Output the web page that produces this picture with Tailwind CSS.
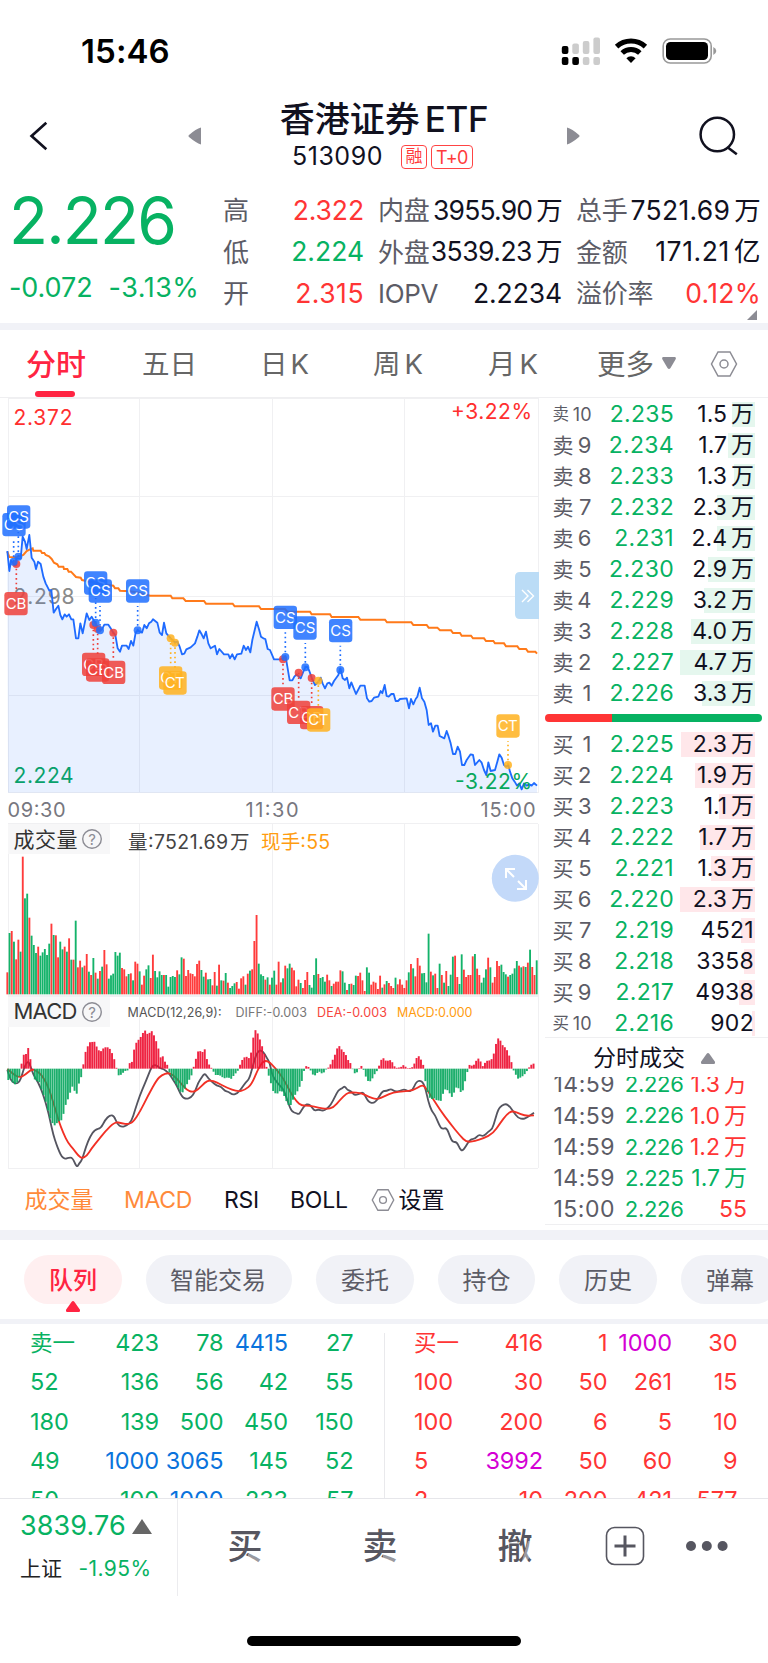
<!DOCTYPE html>
<html lang="zh-CN">
<head>
<meta charset="utf-8">
<title>香港证券ETF 513090</title>
<script src="https://cdn.jsdelivr.net/npm/@tailwindcss/browser@4"></script>
</head>
<body class="bg-white font-['Inter','Noto_Sans_CJK_SC',sans-serif] text-[#11111f]">
<div class="flex h-[1663px] w-[768px] flex-col overflow-hidden bg-white">

  <!-- status bar -->
  <div class="flex h-[98px] shrink-0 items-start pt-[30px] pl-[81px]">
    <div class="w-[478.500px] text-[33px] leading-[42px] font-semibold tracking-[0.100px] text-black">15:46</div>
    <svg class="h-[42px] w-[160px]" viewBox="560 30 160 42">
      <g fill="#000"><rect x="561.8" y="46" width="6.6" height="8" rx="2"/><rect x="561.8" y="57" width="6.6" height="8" rx="2"/><rect x="572.3" y="57" width="6.6" height="8" rx="2"/></g>
      <g fill="#ccc"><rect x="572.3" y="43.5" width="6.6" height="10.5" rx="2"/><rect x="582.8" y="41" width="6.6" height="13" rx="2"/><rect x="593.4" y="37.5" width="6.6" height="16.5" rx="2"/><rect x="582.8" y="57" width="6.6" height="8" rx="2"/><rect x="593.4" y="57" width="6.6" height="8" rx="2"/></g>
      <g fill="none" stroke="#000" stroke-width="5"><path d="M616.6 46.6A21 21 0 0 1 645.4 46.6"/><path d="M622.2 53A12.8 12.8 0 0 1 639.8 53"/></g>
      <path d="M626.4 58.2a6.6 6.6 0 0 1 9.2 0L631 63z" fill="#000"/>
      <rect x="663.2" y="39" width="48" height="24" rx="7" fill="none" stroke="#999" stroke-width="1.6"/>
      <rect x="666" y="42" width="42" height="18" rx="4.5" fill="#000"/>
      <path d="M713.3 47v8q3-1.5 3-4t-3-4" fill="#999"/>
    </svg>
  </div>

  <!-- title bar -->
  <div class="flex h-[82px] shrink-0 items-start pl-[29px]">
    <svg class="mt-[22px] h-8 w-5 shrink-0" viewBox="29 120 20 32"><path d="M46.300 122.800L31.600 136l14.700 13.200" fill="none" stroke="#11111f" stroke-width="2.700"/></svg>
    <svg class="mt-[28px] ml-[138px] h-5 w-4 shrink-0" viewBox="187 126 16 20"><path d="M201 127.500v17q-5-1.500-12-7.400q-1.300-1.100 0-2.200q7-5.900 12-7.400" fill="#8c8c94"/></svg>
    <div class="flex h-[82px] w-[362px] shrink-0 flex-col items-center pt-[1px]">
      <div class="flex h-[40px] items-center gap-[5px] text-[35px] leading-[40px] font-medium"><span>香港证券</span><span class="tracking-[-0.300px]">ETF</span></div>
      <div class="flex h-9 items-center pr-[3px]">
        <span class="mr-[18px] text-[25px] tracking-[0.500px]">513090</span>
        <span class="mr-1 flex h-6 w-[26px] items-center justify-center rounded border-[1.500px] border-[#ff4444] text-[17px] text-[#ff3b3b]">融</span>
        <span class="flex h-6 w-[42px] items-center justify-center rounded border-[1.500px] border-[#ff4444] text-[18px] tracking-[-0.500px] text-[#ff3b3b]">T+0</span>
      </div>
    </div>
    <svg class="mt-[28px] h-5 w-4 shrink-0" viewBox="565 126 16 20"><path d="M567 127.500v17q5-1.500 12-7.400q1.300-1.100 0-2.200q-7-5.900-12-7.400" fill="#8c8c94"/></svg>
    <svg class="mt-[16px] ml-[117px] h-[44px] w-[42px] shrink-0" viewBox="698 114 42 44"><g fill="none" stroke="#11111f" stroke-width="2.500"><circle cx="717.300" cy="134.500" r="16.700"/><path d="M727.500 147.200L736.800 154.300"/></g></svg>
  </div>

  <!-- quote -->
  <div class="flex h-[143px] shrink-0 pt-[10px]">
    <div class="w-[223px] pl-[9px] text-[#07b262]">
      <div class="h-[62px] text-[64px] leading-[62px] tracking-[-1.800px]">2.226</div>
      <div class="mt-[15px] flex gap-[16px] text-[27px] leading-[42px] tracking-[-0.100px]"><span>-0.072</span><span class="tracking-[0.500px]">-3.13%</span></div>
    </div>
    <div id="stats" class="grid h-[125px] w-[539px] grid-cols-[141px_184px_185px] gap-x-[14px] text-[27px]"></div>
  </div>
  <div class="relative h-[7px] shrink-0 bg-[#f1f2f7]"><svg class="absolute -top-[13px] right-[11px] h-[10px] w-[10px]" viewBox="0 0 10 10"><path d="M10 0v10H0z" fill="#8c8c94"/></svg></div>

  <!-- period tabs -->
  <div class="flex h-[68px] shrink-0 border-b border-[#efeff1] text-[27.500px] leading-[69px] text-[#666]">
    <div class="relative ml-[26px] w-[60px] text-[30px] font-medium text-[#ff2442]">分时<span class="absolute bottom-0 left-[9px] h-[6px] w-10 rounded-[3px] bg-[#ff2442]"></span></div>
    <div class="ml-[56px] w-[56px]">五日</div>
    <div class="ml-[62px] flex w-[54px] gap-[3px]"><span>日</span><span>K</span></div>
    <div class="ml-[59px] flex w-[54px] gap-[4px]"><span>周</span><span>K</span></div>
    <div class="ml-[61px] flex w-[54px] gap-[4px]"><span>月</span><span>K</span></div>
    <div class="ml-[55px] w-[59px] text-[28.500px]">更多</div>
    <svg class="mt-[27px] ml-[6px] h-[13px] w-[14px]" viewBox="0 0 14 13"><path d="M1 0h12q1.500.5.500 2.500L8.500 11q-1.500 2-3 0L.5 2.500Q-.5.500 1 0" fill="#8c8c94"/></svg>
    <svg class="mt-[20px] ml-[34px] h-7 w-7" viewBox="0 0 28 28"><g fill="none" stroke="#8c8c94" stroke-width="1.500"><path d="M8 2h12l6.500 12L20 26H8L1.500 14z"/><circle cx="14" cy="14" r="4"/></g></svg>
  </div>

  <!-- charts and order book -->
  <div class="flex h-[832px] shrink-0">
    <div class="flex w-[545px] flex-col">
      <svg class="h-[426px] w-[545px]" viewBox="0 398 545 426">
        <g stroke="#f0f0f2"><path d="M8.500 398V793M139.500 398V793M272.500 398V793M404.500 398V793M538.500 398V793M8 398.500H538M8 496.500H538M8 596.500H538M8 695.500H538M8 792.500H538M8 823.500H538" fill="none"/></g>
        <g font-size="21" lengthAdjust="spacing">
          <text x="13.500" y="425" textLength="59" fill="#ff2f2f">2.372</text>
          <text x="13.500" y="604" textLength="61" fill="#8a8a8a">2.298</text>
          <text x="13.500" y="783" textLength="60" fill="#07a85c">2.224</text>
          <text x="451" y="419" textLength="81" fill="#ff2f2f">+3.22%</text>
        </g>
        <g font-size="20" fill="#777780">
          <text x="7.500" y="816.500" textLength="58">09:30</text>
          <text x="245.500" y="816.500" textLength="53">11:30</text>
          <text x="480.500" y="816.500" textLength="55">15:00</text>
        </g>
        <g id="price" transform="translate(0 395) scale(.33333)"></g>
        <text x="455" y="789" font-size="21" textLength="77" fill="#07a85c">-3.22%</text>
        <g id="marks" transform="translate(0 395) scale(.33333)"></g>
        <path d="M539 572h-19q-5 0-5 5v37q0 5 5 5h19z" fill="#bbdcf6"/>
        <path d="M522 590l6 6-6 6M527.500 590l6 6-6 6" fill="none" stroke="#fff" stroke-width="1.400"/>
      </svg>
      <svg class="h-[172px] w-[545px]" viewBox="0 824 545 172">
        <path d="M8.500 824V996M139.500 824V996M272.500 824V996M404.500 824V996M538.500 824V996M8 995.500H538" stroke="#f0f0f2" fill="none"/>
        <rect x="8" y="824" width="102" height="30" fill="#f7f7f8"/>
        <text x="13.500" y="846.500" font-size="21" textLength="64" fill="#333">成交量</text>
        <circle cx="92" cy="839" r="9.300" fill="none" stroke="#8c8c94" stroke-width="1.400"/>
        <text x="92" y="844.500" font-size="15" text-anchor="middle" fill="#8c8c94">?</text>
        <g font-size="19.500"><text x="128" y="848.500" fill="#444" textLength="100">量:7521.69</text><text x="230" y="848.500" fill="#444">万</text><text x="261" y="848.500" textLength="69" fill="#ff9c10">现手:55</text></g>
        <g id="vol" transform="translate(0 815) scale(.33333)"></g>
        <circle cx="515.300" cy="878.300" r="23.500" fill="#c3d9f9"/>
        <path d="M506 878v-9h9M506 869l8 8M517 889h9v-9M526 889l-8-8" fill="none" stroke="#fff" stroke-width="2"/>
      </svg>
      <svg class="h-[175px] w-[545px]" viewBox="0 996 545 175">
        <path d="M8.500 996V1168M139.500 996V1168M272.500 996V1168M404.500 996V1168M538.500 996V1168M8 996.500H538M8 1168.500H538" stroke="#f0f0f2" fill="none"/>
        <rect x="8" y="997" width="102" height="30" fill="#f7f7f8"/>
        <text x="13.500" y="1019" font-size="22" textLength="64" fill="#333">MACD</text>
        <circle cx="92" cy="1012" r="9.300" fill="none" stroke="#8c8c94" stroke-width="1.400"/>
        <text x="92" y="1017.500" font-size="15" text-anchor="middle" fill="#8c8c94">?</text>
        <g font-size="12.500"><text x="127.500" y="1016.500" textLength="94" fill="#555">MACD(12,26,9):</text><text x="235.500" y="1016.500" textLength="71.500" fill="#777">DIFF:-0.003</text><text x="317" y="1016.500" textLength="70" fill="#f6453c">DEA:-0.003</text><text x="397" y="1016.500" textLength="75.500" fill="#ff9c10">MACD:0.000</text></g>
        <g id="macd" transform="translate(0 995) scale(.33333)"></g>
      </svg>
      <div class="flex h-[58px] items-center text-[23px]">
        <span class="ml-[24.500px] w-[99.500px] text-[#ff8a3a]">成交量</span><span class="w-[100px] tracking-[-0.300px] text-[#ff8a3a]">MACD</span><span class="w-[66px] tracking-[-0.300px]">RSI</span><span class="w-[80.500px] tracking-[-0.200px]">BOLL</span>
        <svg class="mr-[4px] h-6 w-6" viewBox="0 0 28 28"><g fill="none" stroke="#8c8c94" stroke-width="1.600"><path d="M8 2h12l6.500 12L20 26H8L1.500 14z"/><circle cx="14" cy="14" r="4"/></g></svg>
        <span>设置</span>
      </div>
    </div>

    <div class="flex w-[223px] flex-col">
      <div id="asks" class="flex h-[311px] flex-col pt-[1px]"></div>
      <div class="mt-[5px] flex h-2 w-[217px] overflow-hidden rounded-full"><span class="w-[67px] bg-[#ff3535]"></span><span class="flex-1 bg-[#07b262]"></span></div>
      <div id="bids" class="mt-[7px] flex h-[308px] flex-col"></div>
      <div class="flex h-[40px] items-center border-t border-[#efeff1] pt-[2px] pl-[48px] text-[23px]">分时成交<svg class="ml-4 h-[11px] w-[14px]" viewBox="0 0 14 11"><path d="M5.500 1q1.500-2 3 0L13.800 8.500q1 2-1 2.500H1.200q-2-.5-1-2.500z" fill="#8c8c94"/></svg></div>
      <div class="flex h-[148px] flex-col justify-end overflow-hidden border-b border-[#efeff1]"><div id="ticks" class="-mb-[1px] shrink-0"></div></div>
    </div>
  </div>

  <div class="h-[10px] shrink-0 bg-[#f1f2f7]"></div>

  <!-- section chips -->
  <div class="flex h-[79px] shrink-0 gap-6 overflow-hidden pt-[15px] pl-6 text-[24px] text-[#5c5c66]">
    <div class="relative flex h-[49px] w-[98px] shrink-0 items-center justify-center rounded-full bg-[#ffeff0] pt-[2px] font-medium text-[#ff2442]">队列<svg class="absolute top-[46px] left-[42px] h-[11px] w-[14px]" viewBox="0 0 14 11"><path d="M5.500 1q1.500-2 3 0L13.800 8.500q1 2-1 2.500H1.200q-2-.5-1-2.500z" fill="#ff2442"/></svg></div>
    <div class="flex h-[49px] w-[146px] shrink-0 items-center justify-center rounded-full bg-[#f1f2f7] pt-[2px] pr-[2px]">智能交易</div>
    <div class="flex h-[49px] w-[98px] shrink-0 items-center justify-center rounded-full bg-[#f1f2f7] pt-[2px]">委托</div>
    <div class="flex h-[49px] w-[97px] shrink-0 items-center justify-center rounded-full bg-[#f1f2f7] pt-[2px]">持仓</div>
    <div class="flex h-[49px] w-[98px] shrink-0 items-center justify-center rounded-full bg-[#f1f2f7] pt-[2px]">历史</div>
    <div class="flex h-[49px] w-[98px] shrink-0 items-center justify-center rounded-full bg-[#f1f2f7] pt-[2px]">弹幕</div>
  </div>
  <div class="h-[5px] shrink-0 bg-[#f1f2f7]"></div>

  <!-- order queue -->
  <div class="flex h-[174px] shrink-0 overflow-hidden text-[23.500px] tracking-[-0.100px]">
    <div id="qs" class="-mt-[1px] w-[384px] pl-[30px] text-[#07b262]"></div>
    <div class="mt-[9px] w-px bg-[#e9e9ec]"></div>
    <div id="qb" class="-mt-[1px] w-[383px] pl-[29px] text-[#ff3535]"></div>
  </div>

  <!-- bottom bar -->
  <div class="flex h-[98px] shrink-0 border-t border-[#e6e6ea]">
    <div class="w-[178px] border-r border-[#ececef] pl-[20px] text-[#07b262]">
      <div class="mt-[9px] flex h-9 items-center text-[27px] tracking-[0.100px]">3839.76<svg class="ml-[6px] h-[15px] w-5" viewBox="0 0 20 15"><path d="M10 0l10 15H0z" fill="#666"/></svg></div>
      <div class="mt-[9px] flex h-8 items-center text-[21px]"><span class="w-[58.500px] text-[#222]">上证</span><span class="tracking-[0.400px]">-1.95%</span></div>
    </div>
    <div class="flex h-[94px] items-center text-[35px] font-medium text-[#565660]">
      <div class="ml-[49.500px] w-[135px]"><span class="relative inline-block">买<span class="absolute right-[1px] bottom-[7px] h-[11px] w-[14px] bg-white/40"></span></span></div>
      <div class="w-[135px]"><span class="relative inline-block">卖<span class="absolute right-[1px] bottom-[7px] h-[11px] w-[14px] bg-white/40"></span></span></div>
      <div class="w-[107px]"><span class="relative inline-block">撤<svg class="absolute right-0 bottom-[8px] h-[23px] w-[12px]" viewBox="0 0 12 23"><path d="M7 0h5v11L4 23H0z" fill="#fff" fill-opacity=".4"/></svg></span></div>
      <svg class="h-10 w-10" viewBox="0 0 40 40"><rect x="1.500" y="1.500" width="37" height="37" rx="8" fill="none" stroke="#565660" stroke-width="1.600"/><path d="M9.500 20h21M20 9.500v21" stroke="#565660" stroke-width="3"/></svg>
      <svg class="ml-[41.500px] h-3 w-[42px]" viewBox="0 0 42 12"><g fill="#565660"><circle cx="5" cy="6" r="5"/><circle cx="20.800" cy="6" r="5"/><circle cx="36.600" cy="6" r="5"/></g></svg>
    </div>
  </div>
  <div class="flex shrink-0 justify-center pt-[40px]"><span class="h-[10px] w-[274px] rounded-full bg-black"></span></div>
</div>

<script>
const $ = id => document.getElementById(id);
const unit = s => s.replace(/([万亿])/, '<span class="ml-[4px]">$1</span>');

/* header statistics: label, value, colour, tracking */
const R='text-[#ff3535]', G='text-[#07b262]', K='text-[#11111f]';
$('stats').innerHTML = [['高','2.322',R,'tracking-[-0.100px]'],['内盘','3955.90万',K,'tracking-[-0.800px]'],['总手','7521.69万',K,'tracking-[0.300px]'],['低','2.224',G,'tracking-[0px]'],['外盘','3539.23万',K,'tracking-[-0.500px]'],['金额','171.21亿',K,'tracking-[0.600px]'],['开','2.315',R,'tracking-[0.500px]'],['IOPV','2.2234',K,'tracking-[-0.100px]'],['溢价率','0.12%',R,'tracking-[0.300px]']]
 .map(([a,b,c,t]) => `<div class="flex h-[41.200px] items-center justify-between whitespace-nowrap"><span class="text-[26px] tracking-[-0.300px] text-[#5c5c66]">${a}</span><span class="text-[26.500px] ${t} ${c}">${unit(b)}</span></div>`).join('');

/* order book */
const book = (side,rows,bg) => rows.map(([n,p,v,w]) => `<div class="relative flex h-[31px] shrink-0 items-center pl-[7.500px] text-[23px] leading-[31px]"><span class="absolute top-[3px] right-[13px] h-[25px] ${bg}" style="width:${w}px"></span><span class="flex w-[39px] justify-between text-[#5c5c66] ${n==10?'text-[16.500px]':'text-[21px]'}"><span>${side}</span><span class="${n==10?'text-[18px]':'text-[22px]'}">${n}</span></span><span class="w-[82.500px] text-right tracking-[0.300px] text-[#07b262]">${p}</span><span class="relative w-[80px] text-right ${v.length<5&&!v.includes('万')?'tracking-[0.300px]':''}">${unit(v)}</span></div>`).join('');
$('asks').innerHTML = book('卖',[[10,'2.235','1.5万',23],[9,'2.234','1.7万',27],[8,'2.233','1.3万',21],[7,'2.232','2.3万',38],[6,'2.231','2.4万',38],[5,'2.230','2.9万',47],[4,'2.229','3.2万',51],[3,'2.228','4.0万',64],[2,'2.227','4.7万',75],[1,'2.226','3.3万',53]],'bg-[#e5f7ee]');
$('bids').innerHTML = book('买',[[1,'2.225','2.3万',74],[2,'2.224','1.9万',60],[3,'2.223','1.1万',36],[4,'2.222','1.7万',55],[5,'2.221','1.3万',44],[6,'2.220','2.3万',75],[7,'2.219','4521',14],[8,'2.218','3358',11],[9,'2.217','4938',16],[10,'2.216','902',3]],'bg-[#ffe7ea]');
$('ticks').innerHTML = [['14:59','2.226','1.3万',R],['14:59','2.226','1.0万',R],['14:59','2.226','1.2万',R],['14:59','2.225','1.7万',G],['15:00','2.226','55',R]]
 .map(([t,p,v,c]) => `<div class="flex h-[31.200px] items-center pl-[8.500px] text-[23px]"><span class="w-[64px] tracking-[0.500px] text-[#5c5c66]">${t}</span><span class="w-[66px] text-right text-[22px] tracking-[-0.300px] text-[#07b262]">${p}</span><span class="w-[63.500px] text-right ${c}">${unit(v)}</span></div>`).join('');

/* order queue */
const queue = (rows,big) => rows.map(r => `<div class="grid h-[39.300px] grid-cols-[49px_80px_64.500px_64.500px_65.500px] items-center">${r.map((v,i)=>`<span class="${i?'text-right':'whitespace-nowrap'} ${isNaN(v)?'text-[22.500px]':''} ${+v>=1000?big:''}">${v}</span>`).join('')}</div>`).join('');
$('qs').innerHTML = queue([['卖一',423,78,4415,27],[52,136,56,42,55],[180,139,500,450,150],[49,1000,3065,145,52],[50,100,1000,233,57]],'text-[#0a73dc]');
$('qb').innerHTML = queue([['买一',416,1,1000,30],[100,30,50,261,15],[100,200,6,5,10],[5,3992,50,60,9],[2,10,200,421,577]],'text-[#d400d4]');

/* intraday price: left and right halves are sampled separately, the right one starting at x = 780 */
const pts = (a,b) => (a+' '+b.replace(/(\S+),(\S+)/g,(m,x,y)=>(+x+780)+','+y));
const price = pts('22,468 28,528 33,497 40,505 45,512 50,490 62,490 68,425 75,440 80,462 88,420 95,488 103,500 108,522 114,500 122,507 130,545 137,565 142,575 148,587 154,585 161,653 168,642 175,632 181,660 187,673 194,658 200,665 207,658 214,673 220,673 228,730 235,730 241,685 248,715 260,655 268,675 275,665 285,683 292,700 300,706 306,703 313,689 325,689 332,700 340,713 346,720 353,760 360,770 366,752 380,752 386,762 393,738 400,752 407,713 413,706 426,713 433,690 440,700 447,685 454,680 459,673 472,683 479,713 486,720 492,683 499,715 512,730 525,742 532,740 539,755 546,778 553,776 559,763 572,757 585,745 592,725 598,706 605,718 611,730 618,710 625,745 632,760 645,752 651,778 658,762 672,778 685,778 690,790 697,778 704,793 711,778 724,776 731,752 738,765 744,755 751,772 757,735 770,680 777,703 783,725 790,730 796,732 803,762 810,765 822,793 836,793',
 '60,793 70,790 77,785 89,856 97,856 103,845 110,838 117,845 122,850 130,830 136,817 142,815 148,828 155,848 165,870 175,860 182,848 188,866 195,880 202,865 208,863 215,872 222,858 235,840 241,820 248,850 255,855 261,848 268,880 274,862 288,897 301,872 314,872 321,910 328,920 335,918 342,908 355,905 362,888 367,895 374,870 380,903 386,905 394,897 401,897 407,918 414,918 420,912 440,910 447,940 453,912 460,928 467,912 472,905 479,878 486,910 493,920 500,945 506,990 513,985 519,1010 526,992 533,992 539,1023 553,1030 560,1008 566,1025 572,1045 579,1077 586,1077 593,1055 600,1070 606,1110 613,1110 620,1095 632,1078 639,1080 645,1110 658,1095 665,1103 672,1125 679,1140 685,1102 692,1128 705,1125 712,1100 718,1078 725,1088 732,1110 738,1115 745,1110 750,1130 757,1150 764,1160 771,1172 778,1165 785,1183 792,1165 800,1172 808,1168 815,1172 822,1164 831,1172');
const avg = pts('22,470 28,486 48,487 70,480 80,468 90,463 98,460 100,467 122,467 126,474 133,474 137,480 147,484 155,492 162,503 172,508 176,515 190,515 192,522 202,522 206,530 213,530 228,546 242,548 246,555 270,560 300,566 340,572 345,580 355,580 360,587 390,589 420,594 450,602 512,602 517,610 550,610 557,618 612,618 618,626 698,626 704,634 777,634 783,642 840,642',
 '75,642 82,650 150,650 155,658 210,658 215,666 295,666 301,674 375,674 381,682 454,682 460,690 500,690 506,698 532,698 540,706 573,706 579,714 600,714 605,722 633,722 639,730 672,730 678,738 700,738 705,745 732,745 738,754 772,754 778,762 798,762 804,770 826,770 831,776');
$('price').innerHTML = `<polygon points="24,1193 ${price} 1611,1193" fill="#1f6bff" fill-opacity=".1"/><polyline points="${avg}" fill="none" stroke="#ff7a1a" stroke-width="6"/><polyline points="${price}" fill="none" stroke="#1f6bff" stroke-width="5.500" stroke-linejoin="round"/>`;

/* trade marks: kind, box x, box y, dot x, dot y */
const kinds = {CS:'#1f6eff', CB:'#ee3f3a', CT:'#ffb21f'};
$('marks').innerHTML = [['CB',13,591,49,507],['CS',7,354,41,500],['CS',21,331,55,485],['CB',246,773,280,690],['CB',258,790,293,702],['CB',306,797,340,713],['CS',252,529,287,683],['CS',266,553,300,706],['CS',378,553,413,706],['CT',477,814,512,730],['CT',490,829,525,743],['CB',814,877,849,793],['CS',821,632,856,786],['CB',861,917,896,833],['CS',880,664,916,817],['CB',900,933,935,849],['CT',921,940,955,857],['CS',987,672,1021,825],['CT',1489,958,1524,1110]]
 .map(([k,x,y,dx,dy]) => `<circle cx="${dx}" cy="${dy}" r="12" fill="${kinds[k]}" fill-opacity=".85"/><path d="M${dx} ${dy}V${y>dy?y-6:y+80}" stroke="${kinds[k]}" stroke-width="5" stroke-dasharray="5 9"/><rect x="${x}" y="${y}" width="70" height="70" rx="10" fill="${kinds[k]}" fill-opacity=".85"/><text x="${x+4}" y="${y+51}" font-size="45" textLength="${k=='CT'?60:62}" fill="#fff">${k}</text>`).join('');

/* per-minute volume: colour and top of every bar */
const vol = 'r472 g354 r348 g380 r433 r374 g410 r125 g250 g236 r308 g362 g390 g414 r395 g422 g412 g402 g420 g386 r326 g360 r361 r427 g380 g403 r395 g410 r370 g434 r434 g317 r457 r437 g457 r452 r417 g470 r480 g429 r473 g491 r468 g455 r405 r448 g491 g481 g476 g411 g422 g413 r459 r463 r484 g477 r475 g496 r440 r446 g469 r509 r482 g463 g451 r489 r419 g468 g487 g469 g480 r480 g480 g515 g486 g483 g486 r466 g478 g427 r431 r483 r465 r475 r477 r484 r447 r437 g465 g485 r473 g493 g492 r511 r471 g512 r449 g496 r497 g474 r503 g519 g513 g505 r501 r521 r490 r484 g509 r476 g467 r463 r378 r300 g446 g478 g483 r494 g487 r509 g488 g467 r509 r440 r502 g490 r452 g460 g446 r458 r466 r514 r494 g504 r519 r495 r471 g510 g518 g480 g430 r477 g489 g486 g500 r479 r496 g513 r506 r500 r500 r466 g469 g503 r525 g507 r506 g510 g482 r483 r473 r496 r528 g457 g473 r509 r500 r503 r522 r482 g518 r508 g498 r504 r513 r519 g488 r508 r493 r509 r519 r496 g472 r447 g460 r484 r429 r452 g475 g474 g502 g356 r470 g481 r476 r519 g446 r480 g503 r468 g513 g479 g425 r422 r486 g507 g418 r464 r486 r480 r480 r424 g417 r461 r480 g503 g488 g463 r428 g457 r503 r486 r438 r453 g449 g471 g478 r485 g480 g476 g460 g438 r452 g457 r454 g456 r443 g404 r456 r480 g436'.split(' ');
$('vol').innerHTML = vol.map((b,i) => `<rect x="${(19.2+i*6.617).toFixed(1)}" y="${b.slice(1)}" width="5.600" height="${538-b.slice(1)}" fill="${b[0]=='r'?'#ff3b3b':'#14b36a'}"/>`).join('');

/* MACD histogram, DIFF and DEA */
const hist = pts('25,255 32,250 38,262 45,268 52,262 58,245 62,225 66,197 72,177 78,177 85,158 92,197 96,205 100,240 105,255 118,262 125,285 135,310 145,350 153,378 163,392 170,385 178,378 186,375 197,330 207,305 216,273 222,285 230,297 237,265 244,245 248,222 255,175 268,142 283,140 290,155 300,172 310,160 320,155 330,162 340,182 346,205 350,221 355,241 362,240 375,228 384,226 388,205 397,200 402,165 410,140 420,130 428,115 435,106 443,118 456,108 466,130 475,160 482,188 488,183 495,200 502,210 506,228 515,245 530,270 545,297 555,280 565,260 575,240 579,221 585,205 592,170 600,168 610,172 614,162 618,185 627,208 633,217 638,224 645,240 658,240 672,250 684,247 695,252 702,240 712,230 717,221 722,202 730,190 738,183 745,192 752,180 757,150 763,103 770,108 777,125 785,150 792,170 797,203',
 '22,228 30,255 40,290 50,298 60,288 68,290 75,310 85,330 95,330 100,310 108,295 115,285 125,260 130,237 135,215 142,212 148,219 155,232 162,245 170,235 178,230 188,237 195,228 200,221 208,216 215,200 222,187 228,170 235,150 242,158 248,170 255,172 262,192 270,202 276,214 280,232 288,237 295,225 301,215 307,211 313,232 320,252 327,262 335,255 342,240 350,230 355,215 360,208 367,183 373,195 380,198 387,196 394,195 400,209 407,219 420,217 427,214 433,207 440,223 447,217 453,221 460,212 467,198 473,178 480,190 486,198 493,221 497,268 505,300 513,315 520,308 528,315 545,318 550,292 558,280 566,290 577,308 585,285 592,272 600,290 607,293 614,265 620,237 625,222 630,205 636,213 645,207 650,193 657,190 664,204 670,217 677,198 690,196 698,190 704,165 710,138 716,128 723,140 730,155 738,158 745,175 752,192 757,212 762,230 768,240 776,254 783,245 790,243 798,232 803,225 808,216 815,208 823,205').split(' ').map(p=>p.split(',').map(Number));
let bars = '';
for (let i=0,k=0;i<239;i++) {
  const x = 25+i*6.62;
  while (k<hist.length-2 && hist[k+1][0]<x) k++;
  const [x0,y0]=hist[k],[x1,y1]=hist[k+1];
  const y = y0+(y1-y0)*Math.min(1,(x-x0)/(x1-x0));
  bars += `<rect x="${(x-2.9).toFixed(1)}" y="${Math.min(y,221).toFixed(1)}" width="5.800" height="${Math.max(1.5,Math.abs(y-221)).toFixed(1)}" fill="${y<221?'#ee1133':'#0aa860'}"/>`;
}
/* quadratic smoothing through midpoints */
const smooth = s => { const p=s.split(' ').map(q=>q.split(',').map(Number)); let d='M'+p[0]; for(let i=1;i<p.length-1;i++) d+=`Q${p[i]} ${(p[i][0]+p[i+1][0])/2},${(p[i][1]+p[i+1][1])/2}`; return d+'L'+p[p.length-1]; };
const diff = pts('22,225 30,250 38,262 48,266 58,262 66,240 75,210 85,198 92,215 100,240 115,262 130,300 142,340 150,375 160,420 170,450 178,470 185,485 195,492 205,488 218,488 230,518 238,505 246,495 258,455 270,425 285,403 303,400 315,375 330,360 342,362 352,388 365,396 380,392 395,378 405,345 420,300 435,265 445,240 455,215 465,208 480,220 490,222 505,232 520,255 532,275 545,305 558,312 573,308 585,290 595,262 605,248 614,234 625,250 638,262 650,272 663,275 675,288 685,290 698,300 712,295 725,280 737,262 748,252 758,215 768,180 778,165 790,170',
 '20,188 30,205 35,235 45,255 60,272 72,285 85,325 95,350 110,355 117,358 125,345 135,330 145,327 155,335 163,348 175,343 188,348 200,342 212,330 225,305 235,285 247,280 254,273 262,285 272,288 285,302 300,295 310,292 320,312 328,322 340,325 352,315 367,288 380,288 393,281 405,290 420,288 433,282 445,290 458,285 470,258 485,257 495,275 505,320 515,348 525,360 540,395 547,402 560,398 570,425 578,442 590,440 600,462 607,468 617,455 630,433 645,432 657,418 670,425 685,410 697,402 705,375 715,342 725,332 738,326 750,335 760,350 775,370 790,372 800,368 822,353');
const dea = pts('22,222 40,238 58,248 75,240 95,222 110,228 125,240 140,265 155,305 175,375 190,415 205,445 220,462 235,482 246,490 260,483 275,460 295,435 315,410 345,380 365,385 385,388 400,380 420,350 445,300 470,255 485,240 505,233 520,240 540,262 560,285 578,292 595,283 615,262 630,255 650,262 680,278 712,290 735,285 755,268 775,220',
 '10,198 25,198 45,218 70,250 90,290 110,320 125,332 150,332 175,338 200,342 220,338 240,315 260,295 272,292 305,294 325,305 350,314 375,303 400,292 430,289 460,286 485,270 495,275 515,305 540,345 570,385 600,422 620,442 645,438 670,430 700,415 720,385 740,358 755,348 770,352 795,363 822,361');
$('macd').innerHTML = `<g fill="none" stroke-width="5.500"><path d="${smooth(diff)}" stroke="#555560"/><path d="${smooth(dea)}" stroke="#f23025"/></g><g opacity=".92">${bars}</g>`;
</script>
</body>
</html>
